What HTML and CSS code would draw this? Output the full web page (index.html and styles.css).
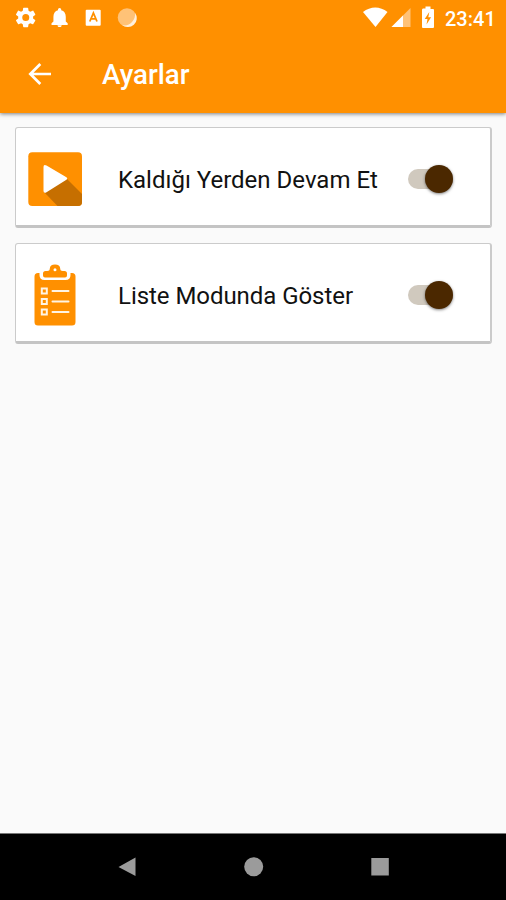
FILE: index.html
```html
<!DOCTYPE html>
<html lang="tr">
<head>
<meta charset="utf-8">
<title>Ayarlar</title>
<link rel="stylesheet" href="styles.css">
</head>
<body>
<div class="screen">
  <header class="header">
    <div class="status">
      <svg class="status-left" width="140" height="36" viewBox="0 0 140 36">
        <path fill="#fff" fill-rule="evenodd" transform="translate(13.400 5.100) scale(1.030)" d="M19.1 12.9a7 7 0 0 0 0-1.8l2-1.6c.2-.1.2-.4.1-.6l-1.900-3.300c-.1-.2-.4-.3-.6-.2l-2.400 1c-.5-.4-1-.7-1.600-1l-.4-2.500c0-.2-.2-.4-.5-.4H10c-.3 0-.5.2-.5.4l-.4 2.500c-.6.3-1.100.6-1.600 1l-2.400-1c-.2-.1-.5 0-.6.2L2.600 8.900c-.1.200-.1.500.1.600l2 1.600a7 7 0 0 0 0 1.800l-2 1.600c-.2.100-.2.400-.1.600l1.900 3.300c.1.200.4.300.6.200l2.400-1c.5.400 1 .7 1.600 1l.4 2.500c0 .2.200.4.500.4h3.800c.3 0 .5-.2.500-.4l.4-2.500c.6-.3 1.100-.6 1.600-1l2.400 1c.2.100.5 0 .6-.2l1.900-3.300c.1-.2.100-.5-.1-.6zM12 15.400a3.400 3.400 0 1 1 0-6.800 3.400 3.400 0 0 1 0 6.800z"/>
        <path fill="#fff" transform="translate(48.200 6.200) scale(.95)" d="M12 22c1.200 0 2.200-.8 2.200-2H9.800c0 1.200 1 2 2.200 2zm6.500-6v-5c0-3.300-1.700-6-4.800-6.700V3.600a1.700 1.700 0 0 0-3.400 0v.7C7.200 5 5.500 7.700 5.500 11v5l-2 2v1.700h17V18z"/>
        <rect x="85.700" y="9.800" width="15" height="16" rx="1" fill="#fff"/>
        <path d="M89.800 21.500l3.600-8.500 3.600 8.500M91 18.800h5" fill="none" stroke="#ff9000" stroke-width="1.800"/>
        <circle cx="127" cy="17.500" r="9.300" fill="#ffc277"/>
        <path d="M135.200 13a9 9 0 0 1-13.200 12q6 1.500 10-3 3.500-4 3.200-9z" fill="#fff0dc"/>
      </svg>
      <div class="status-right">
        <svg width="76" height="36" viewBox="0 0 76 36">
          <path d="M0 12C7.500 6 17 6 24.500 12L12.500 27z" fill="#fff"/>
          <path d="M47.500 8v19h-19z" fill="#ffc277"/>
          <path d="M40 15.500V27H28.500z" fill="#fff"/>
          <path d="M60 8.500h2.500V6.500h5v2.500h2.500q1 0 1 1v17q0 1-1 1h-10q-1 0-1-1v-17q0-1.500 1-1.500z" fill="#fff"/>
          <path d="M66.300 12l-4.600 7h2.800l-1 5.500 4.600-7.300h-2.800z" fill="#ff9000"/>
        </svg>
        <span class="clock">23:41</span>
      </div>
    </div>
    <div class="appbar">
      <svg class="back" width="24" height="24" viewBox="0 0 24 24"><path d="M23 12H2.500M12.300 2L2.300 12l10 10" fill="none" stroke="#fff" stroke-width="2.700"/></svg>
      <h1 class="title">Ayarlar</h1>
    </div>
  </header>
  <main class="list">
    <section class="card">
      <div class="icon">
        <svg width="54" height="54" viewBox="0 0 54 54">
          <rect x=".3" y=".3" width="53.700" height="53.700" rx="4" fill="#ff9000"/>
          <path d="M16 40l23-13 15 15v8q0 4-4 4H29.500z" fill="#c66f00"/>
          <path d="M15.500 15q0-3 3-1.500L38 25q2.500 1.500 0 3L18.500 40.200q-3 1.500-3-1.500z" fill="#fff"/>
        </svg>
      </div>
      <span class="label">Kaldığı Yerden Devam Et</span>
      <div class="switch"><span class="thumb"></span></div>
    </section>
    <section class="card">
      <div class="icon">
        <svg width="42" height="62" viewBox="0 0 42 62">
          <path d="M4 9h1.500v2q0 5 5 5h21q5 0 5-5V9H38q3.500 0 3.500 3.500v45.500q0 3.500-3.500 3.500H4Q.5 61.500.5 58V12.500Q.5 9 4 9z" fill="#ff9000"/>
          <path fill-rule="evenodd" d="M11 13.500q-2 0-2-2V9.500q0-2.500 2.500-2.500h1.800q2.500 0 2.500-2.500Q16 .5 21 .5t5.200 4Q26.200 7 28.700 7h1.800q2.500 0 2.500 2.500v2q0 2-2 2zM21 4.300a1.500 1.500 0 1 0 0 3 1.500 1.500 0 0 0 0-3z" fill="#ff9000"/>
          <g fill="none" stroke="#fff4e4" stroke-width="2">
            <rect x="7.800" y="24.500" width="5" height="5"/><rect x="7.800" y="35" width="5" height="5"/><rect x="7.800" y="45.500" width="5" height="5"/>
            <path d="M18.500 27h16M18.500 37.500h16M18.500 48h16" stroke-linecap="round"/>
          </g>
        </svg>
      </div>
      <span class="label label-list">Liste Modunda Göster</span>
      <div class="switch"><span class="thumb"></span></div>
    </section>
  </main>
  <nav class="navbar">
    <svg width="20" height="20" viewBox="0 0 20 20"><path d="M1.500 10L18.500.5v18.500z" fill="#9b9b9b"/></svg>
    <svg width="20" height="20" viewBox="0 0 20 20"><circle cx="9.700" cy="9.700" r="9.500" fill="#9b9b9b"/></svg>
    <svg width="20" height="20" viewBox="0 0 20 20"><path d="M1.300 1h17.500v17.500H1.300z" fill="#9b9b9b"/></svg>
  </nav>
</div>
</body>
</html>
```
FILE: styles.css
```css
* { box-sizing: border-box; }
body { margin: 0; font-family: Roboto, sans-serif; }
.screen { display: flex; flex-direction: column; width: 506px; height: 900px; background: #fafafa; }
.header { height: 112.5px; background: #ff9000; color: #fff; box-shadow: 0 1px 4px rgba(0, 0, 0, .5); }
.status { display: flex; justify-content: space-between; height: 36px; }
.status-right { display: flex; padding-right: 11px; }
.clock { width: 56px; padding-left: 6px; font-size: 20px; font-weight: 500; line-height: 38px; white-space: nowrap; }
.appbar { display: flex; align-items: center; height: 76px; padding-left: 28px; }
.title { margin: 2px 0 0 50px; font-size: 27.700px; font-weight: 500; line-height: 32px; }
.list { display: flex; flex: 1; flex-direction: column; gap: 15px; padding-top: 14.500px; padding-right: 14px; padding-left: 15px; }
.card { display: flex; align-items: center; height: 101px; border: 1px solid #cbcbcb; border-right-width: 2px; border-bottom: 3px solid #c4c4c4; border-radius: 3px; background: #fff; }
.icon { display: flex; justify-content: center; width: 78px; padding-top: 4px; }
.label { width: 290px; margin-left: 24px; padding-top: 6px; font-size: 24px; line-height: 32px; color: #111; white-space: nowrap; }
.label-list { letter-spacing: -.05px; }
.switch { display: flex; align-items: center; justify-content: flex-end; width: 45px; height: 20px; margin-top: 4px; border-radius: 10px; background: #d0c9be; }
.thumb { width: 28px; height: 28px; flex: none; border-radius: 50%; background: #4b2800; box-shadow: 0 1px 3px rgba(0, 0, 0, .5); }
.navbar { display: flex; align-items: center; justify-content: space-between; height: 67px; padding: 0 116px 0 117px; border-top: 1px solid #777; background: #000; }
```
